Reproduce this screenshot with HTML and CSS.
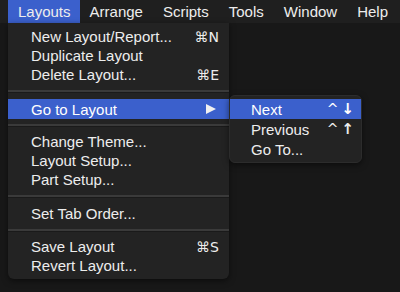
FILE: index.html
```html
<!DOCTYPE html>
<html>
<head>
<meta charset="utf-8">
<link rel="stylesheet" href="styles.css">
</head>
<body>
<div class="screen">
  <div class="menubar">
    <span class="mb-item active">Layouts</span>
    <span class="mb-item">Arrange</span>
    <span class="mb-item">Scripts</span>
    <span class="mb-item">Tools</span>
    <span class="mb-item">Window</span>
    <span class="mb-item">Help</span>
  </div>
  <div class="menu">
    <div class="row"><span>New Layout/Report...</span><span class="sc">⌘N</span></div>
    <div class="row"><span>Duplicate Layout</span></div>
    <div class="row"><span>Delete Layout...</span><span class="sc">⌘E</span></div>
    <div class="sep"></div>
    <div class="row hl tall"><span>Go to Layout</span><span class="tri"></span></div>
    <div class="sep narrow"></div>
    <div class="row"><span>Change Theme...</span></div>
    <div class="row"><span>Layout Setup...</span></div>
    <div class="row"><span>Part Setup...</span></div>
    <div class="sep"></div>
    <div class="row"><span>Set Tab Order...</span></div>
    <div class="sep mid"></div>
    <div class="row"><span>Save Layout</span><span class="sc">⌘S</span></div>
    <div class="row"><span>Revert Layout...</span></div>
  </div>
  <div class="submenu">
    <div class="srow hl"><span>Next</span><span class="sc2">^<span class="arr">↓</span></span></div>
    <div class="srow"><span>Previous</span><span class="sc2">^<span class="arr">↑</span></span></div>
    <div class="srow"><span>Go To...</span></div>
  </div>
</div>
</body>
</html>
```

FILE: styles.css
```css
html, body {
  margin: 0;
  padding: 0;
  background: #181818;
}
.screen {
  position: relative;
  width: 400px;
  height: 292px;
  overflow: hidden;
  background: #181818;
  font-family: "Liberation Sans", Arial, sans-serif;
  font-size: 15px;
  color: #ededed;
}
.menubar {
  display: flex;
  height: 23px;
  padding-left: 8px;
  background: #1f1f1f;
}
.mb-item {
  display: flex;
  align-items: center;
  padding: 0 10px;
  height: 23px;
  line-height: 23px;
}
.mb-item.active {
  background: #3b60cc;
  padding-right: 9px;
}
.menu {
  position: absolute;
  left: 8px;
  top: 23px;
  width: 221px;
  background: #232323;
  border-radius: 0 0 6px 6px;
  padding: 4px 0 4px;
  box-shadow: 0 2px 6px rgba(0,0,0,0.5);
}
.row {
  display: flex;
  align-items: center;
  justify-content: space-between;
  height: 19px;
  padding: 0 10px 0 23px;
}
.row.tall {
  height: 20px;
}
.hl {
  background: #3b60cc;
  color: #fff;
}
.sc {
  font-family: "DejaVu Sans", sans-serif;
  font-size: 14px;
}
.sep {
  height: 2px;
  background: #3a3a3a;
  margin: 6px 0 6px;
  border-bottom: 1px solid #1a1a1a;
}
.sep.narrow {
  margin: 5px 0 5px;
}
.sep.mid {
  margin: 6px 0 5px;
}
.tri {
  width: 0;
  height: 0;
  border-left: 10px solid #f0f0f0;
  border-top: 5.5px solid transparent;
  border-bottom: 5.5px solid transparent;
  margin-right: 3px;
}
.submenu {
  position: absolute;
  left: 229px;
  top: 95px;
  width: 133px;
  background: #232323;
  border: 1px solid #2c2c2c;
  border-radius: 6px;
  padding: 3px 0 3px;
  box-sizing: border-box;
  height: 68px;
  box-shadow: 0 2px 6px rgba(0,0,0,0.5);
}
.srow {
  display: flex;
  align-items: center;
  justify-content: space-between;
  height: 20px;
  padding: 0 7px 0 21px;
}
.sc2 {
  display: flex;
  align-items: center;
  font-family: "DejaVu Sans", sans-serif;
  font-size: 14px;
  gap: 3px;
}
.arr {
  font-size: 15px;
  font-weight: bold;
}
```
